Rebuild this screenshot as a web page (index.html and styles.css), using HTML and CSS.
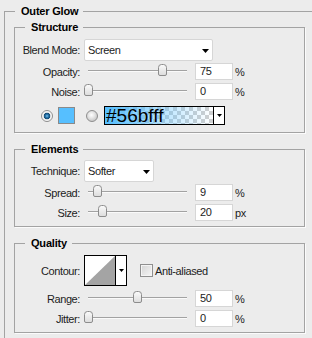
FILE: index.html
```html
<!DOCTYPE html>
<html>
<head>
<meta charset="utf-8">
<link rel="stylesheet" href="styles.css">
</head>
<body>
<fieldset class="outer">
  <legend class="legend">Outer Glow</legend>

  <fieldset class="box structure">
    <legend class="legend">Structure</legend>
    <div class="row r-select first5">
      <span class="lbl">Blend Mode:</span>
      <div class="select w-blend"><span>Screen</span><svg class="arrow" width="7" height="4" viewBox="0 0 7 4"><polygon points="0,0 7,0 3.5,4" fill="#000"/></svg></div>
    </div>
    <div class="row r-num gap2">
      <span class="lbl">Opacity:</span>
      <div class="slider"><div class="track"></div><svg class="thumb" style="left:74px" width="9" height="12" viewBox="0 0 9 12"><defs><linearGradient id="tg1" x1="0" y1="0" x2="0" y2="1"><stop offset="0" stop-color="#fbfbfb"/><stop offset="1" stop-color="#dcdcdc"/></linearGradient></defs><path d="M0.5 3.5 Q0.5 0.5 3.5 0.5 H5.5 Q8.5 0.5 8.5 3.5 V10 Q8.5 11.5 7 11.5 H2 Q0.5 11.5 0.5 10 Z" fill="url(#tg1)" stroke="#8c8c8c"/></svg></div>
      <div class="num">75</div><span class="unit">%</span>
    </div>
    <div class="row r-num gap3">
      <span class="lbl">Noise:</span>
      <div class="slider"><div class="track"></div><svg class="thumb" style="left:0px" width="9" height="12" viewBox="0 0 9 12"><path d="M0.5 3.5 Q0.5 0.5 3.5 0.5 H5.5 Q8.5 0.5 8.5 3.5 V10 Q8.5 11.5 7 11.5 H2 Q0.5 11.5 0.5 10 Z" fill="url(#tg1)" stroke="#8c8c8c"/></svg></div>
      <div class="num">0</div><span class="unit">%</span>
    </div>
    <div class="row r-color">
      <span class="radio on"></span>
      <span class="swatch"></span>
      <span class="radio off"></span>
      <div class="gradbox">
        <div class="gradfill"><span class="hex">#56bfff</span></div>
        <div class="graddrop"><svg width="5" height="3" viewBox="0 0 5 3"><polygon points="0,0 5,0 2.5,3" fill="#000"/></svg></div>
      </div>
    </div>
  </fieldset>

  <fieldset class="box elements">
    <legend class="legend">Elements</legend>
    <div class="row r-select first4">
      <span class="lbl">Technique:</span>
      <div class="select w-tech"><span>Softer</span><svg class="arrow" width="7" height="4" viewBox="0 0 7 4"><polygon points="0,0 7,0 3.5,4" fill="#000"/></svg></div>
    </div>
    <div class="row r-num gap2">
      <span class="lbl">Spread:</span>
      <div class="slider"><div class="track"></div><svg class="thumb" style="left:9px" width="9" height="12" viewBox="0 0 9 12"><path d="M0.5 3.5 Q0.5 0.5 3.5 0.5 H5.5 Q8.5 0.5 8.5 3.5 V10 Q8.5 11.5 7 11.5 H2 Q0.5 11.5 0.5 10 Z" fill="url(#tg1)" stroke="#8c8c8c"/></svg></div>
      <div class="num">9</div><span class="unit">%</span>
    </div>
    <div class="row r-num gap3">
      <span class="lbl">Size:</span>
      <div class="slider"><div class="track"></div><svg class="thumb" style="left:14px" width="9" height="12" viewBox="0 0 9 12"><path d="M0.5 3.5 Q0.5 0.5 3.5 0.5 H5.5 Q8.5 0.5 8.5 3.5 V10 Q8.5 11.5 7 11.5 H2 Q0.5 11.5 0.5 10 Z" fill="url(#tg1)" stroke="#8c8c8c"/></svg></div>
      <div class="num">20</div><span class="unit">px</span>
    </div>
  </fieldset>

  <fieldset class="box quality">
    <legend class="legend">Quality</legend>
    <div class="row r-contour">
      <span class="lbl">Contour:</span>
      <div class="contour">
        <svg class="curve" width="30" height="29" viewBox="0 0 30 29"><rect width="30" height="29" fill="#fff"/><polygon points="0,29 30,0 30,29" fill="#a4a4a4"/></svg>
        <div class="cdrop"><svg width="5" height="3" viewBox="0 0 5 3"><polygon points="0,0 5,0 2.5,3" fill="#000"/></svg></div>
      </div>
      <span class="check"></span>
      <span class="checktext">Anti-aliased</span>
    </div>
    <div class="row r-num gap4">
      <span class="lbl">Range:</span>
      <div class="slider"><div class="track"></div><svg class="thumb" style="left:49px" width="9" height="12" viewBox="0 0 9 12"><path d="M0.5 3.5 Q0.5 0.5 3.5 0.5 H5.5 Q8.5 0.5 8.5 3.5 V10 Q8.5 11.5 7 11.5 H2 Q0.5 11.5 0.5 10 Z" fill="url(#tg1)" stroke="#8c8c8c"/></svg></div>
      <div class="num">50</div><span class="unit">%</span>
    </div>
    <div class="row r-num gap3">
      <span class="lbl">Jitter:</span>
      <div class="slider"><div class="track"></div><svg class="thumb" style="left:0px" width="9" height="12" viewBox="0 0 9 12"><path d="M0.5 3.5 Q0.5 0.5 3.5 0.5 H5.5 Q8.5 0.5 8.5 3.5 V10 Q8.5 11.5 7 11.5 H2 Q0.5 11.5 0.5 10 Z" fill="url(#tg1)" stroke="#8c8c8c"/></svg></div>
      <div class="num">0</div><span class="unit">%</span>
    </div>
  </fieldset>
</fieldset>
</body>
</html>
```

FILE: styles.css
```css
html, body {
  margin: 0;
  padding: 0;
  background: #ececec;
  overflow: hidden;
}
body {
  width: 312px;
  height: 338px;
  font-family: "Liberation Sans", Arial, sans-serif;
  font-size: 11px;
  color: #1c1c1c;
  letter-spacing: -0.4px;
}
.outer {
  margin: 5px 0 0 4px;
  padding: 0;
  width: 308px;
  height: 333px;
  box-sizing: border-box;
  border: 1px solid #a3a3a3;
  border-right: none;
  border-bottom: none;
}
.legend {
  margin-left: 10px;
  padding: 0 5px 0 6px;
  font-weight: bold;
  font-size: 11px;
  line-height: 13px;
  color: #000;
  letter-spacing: -0.2px;
}
.box {
  margin: 0 0 0 9px;
  padding: 0;
  width: 291px;
  box-sizing: border-box;
  border: 1px solid #a3a3a3;
  box-shadow: 1px 1px 0 #fbfbfb;
}
.structure { margin-top: 3px; padding-bottom: 7px; }
.elements { margin-top: 10px; padding-bottom: 5px; }
.quality { margin-top: 10px; padding-bottom: 5px; }

.row {
  display: flex;
  align-items: center;
}
.first5 { margin-top: 5px; }
.first4 { margin-top: 4px; }
.gap2 { margin-top: 2px; }
.gap3 { margin-top: 3px; }
.gap4 { margin-top: 4px; }
.r-select { height: 22px; }
.r-num { height: 17px; }
.r-color { height: 19px; margin-top: 6px; }
.r-contour { height: 31px; margin-top: 5px; }

.lbl {
  width: 65px;
  margin-right: 4px;
  text-align: right;
  flex: none;
  white-space: nowrap;
}
.select {
  height: 22px;
  box-sizing: border-box;
  background: #fff;
  border: 1px solid #d6d6d6;
  border-radius: 2px;
  padding: 0 3px 0 3px;
  display: flex;
  align-items: center;
  justify-content: space-between;
}
.w-blend { width: 129px; }
.w-tech { width: 70px; }
.arrow { display: block; margin-top: 1px; }

.slider {
  position: relative;
  width: 107px;
  height: 17px;
  margin-right: 4px;
  flex: none;
}
.track {
  position: absolute;
  left: 4px;
  right: 4px;
  top: 7px;
  height: 0;
  border-top: 1px solid #a2a2a2;
  border-bottom: 1px solid #fafafa;
}
.thumb {
  position: absolute;
  top: 1px;
  display: block;
}
.num {
  width: 38px;
  height: 17px;
  box-sizing: border-box;
  background: #fff;
  border: 1px solid #d6d6d6;
  padding-left: 4px;
  line-height: 15px;
  flex: none;
}
.unit { margin-left: 2px; }

.radio {
  width: 12px;
  height: 12px;
  box-sizing: border-box;
  border-radius: 50%;
  border: 1px solid #8e8e8e;
  flex: none;
}
.radio.on {
  margin-left: 26px;
  background: radial-gradient(circle at 50% 50%, #7cc6ee 0, #2a76ad 1.5px, #144a72 3px, #e9e9e9 3.6px, #fdfdfd 5px);
}
.radio.off {
  margin-left: 11px;
  background: radial-gradient(circle at 45% 40%, #ffffff 0, #e6e6e6 3px, #c9c9c9 6px);
}
.swatch {
  width: 17px;
  height: 17px;
  box-sizing: border-box;
  margin-left: 5px;
  border: 1px solid #8a8a8a;
  background: #56bfff;
  flex: none;
}
.gradbox {
  margin-left: 6px;
  width: 121px;
  height: 19px;
  box-sizing: border-box;
  border: 1px solid #000;
  display: flex;
  flex: none;
}
.gradfill {
  flex: 1;
  background:
    linear-gradient(to right, rgba(86,191,255,1) 0%, rgba(86,191,255,0.35) 60%, rgba(86,191,255,0) 100%),
    repeating-conic-gradient(#cfcfcf 0 25%, #ffffff 0 50%) 0 0 / 8px 8px;
}
.hex {
  display: block;
  font-size: 19px;
  line-height: 17px;
  color: #000;
  letter-spacing: 0;
  white-space: nowrap;
  padding-left: 1px;
}
.graddrop {
  width: 10px;
  border-left: 1px solid #000;
  background: #fff;
  display: flex;
  align-items: center;
  justify-content: center;
}

.contour {
  width: 43px;
  height: 31px;
  box-sizing: border-box;
  border: 1px solid #000;
  display: flex;
  margin-right: 13px;
  flex: none;
}
.curve { display: block; }
.cdrop {
  width: 10px;
  border-left: 1px solid #000;
  background: #fff;
  display: flex;
  align-items: center;
  justify-content: center;
}
.check {
  width: 13px;
  height: 13px;
  box-sizing: border-box;
  border: 1px solid #8f8f8f;
  box-shadow: inset 0 0 0 1px #f4f4f4;
  background: linear-gradient(135deg, #d4d4d4, #f6f6f6);
  margin-right: 2px;
  flex: none;
}
.checktext { white-space: nowrap; }
```
